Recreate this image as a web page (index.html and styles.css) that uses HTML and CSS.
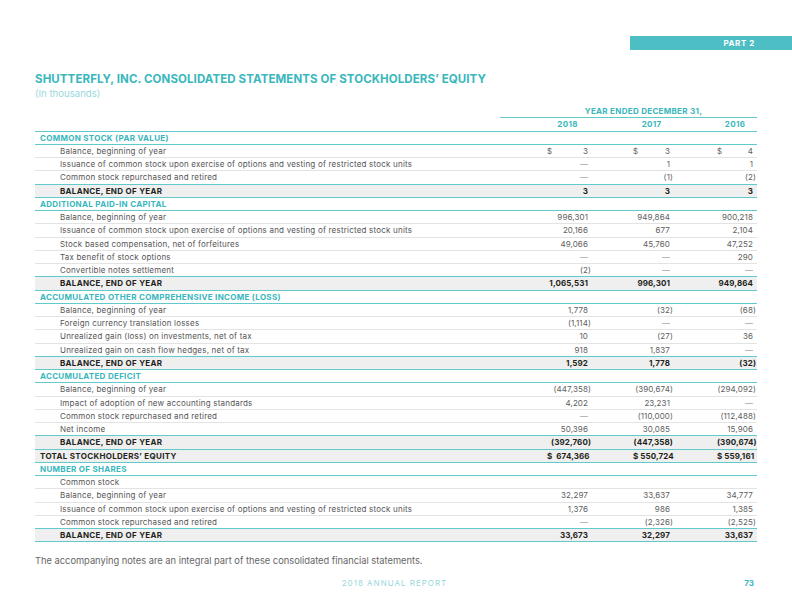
FILE: index.html
```html
<!DOCTYPE html>
<html lang="en">
<head>
    <meta charset="UTF-8">
    <meta name="viewport" content="width=device-width, initial-scale=1.0">
    <title>Consolidated Statements of Stockholders' Equity</title>
    <link rel="stylesheet" href="styles.css">
</head>
<body>
    <div class="page">
        <div class="tab">PART 2</div>

        <h1 class="title">SHUTTERFLY, INC. CONSOLIDATED STATEMENTS OF STOCKHOLDERS’ EQUITY</h1>
        <p class="subtitle">(In thousands)</p>

        <div class="statement">
            <div class="row top">
                <span></span>
                <span class="period">YEAR ENDED DECEMBER 31,</span>
            </div>
            <div class="row years">
                <span></span>
                <span>2018</span>
                <span>2017</span>
                <span>2016</span>
            </div>

            <div class="row section"><span class="lbl">COMMON STOCK (PAR VALUE)</span></div>
            <div class="row">
                <span class="lbl">Balance, beginning of year</span>
                <span class="num"><i class="cur">$</i>3</span>
                <span class="num"><i class="cur">$</i>3</span>
                <span class="num"><i class="cur">$</i>4</span>
            </div>
            <div class="row">
                <span class="lbl">Issuance of common stock upon exercise of options and vesting of restricted stock units</span>
                <span class="num dash">—</span>
                <span class="num">1</span>
                <span class="num">1</span>
            </div>
            <div class="row last">
                <span class="lbl">Common stock repurchased and retired</span>
                <span class="num dash">—</span>
                <span class="num n">(1)</span>
                <span class="num n">(2)</span>
            </div>
            <div class="row balance">
                <span class="lbl">BALANCE, END OF YEAR</span>
                <span class="num">3</span>
                <span class="num">3</span>
                <span class="num">3</span>
            </div>

            <div class="row section"><span class="lbl">ADDITIONAL PAID-IN CAPITAL</span></div>
            <div class="row">
                <span class="lbl">Balance, beginning of year</span>
                <span class="num">996,301</span>
                <span class="num">949,864</span>
                <span class="num">900,218</span>
            </div>
            <div class="row">
                <span class="lbl">Issuance of common stock upon exercise of options and vesting of restricted stock units</span>
                <span class="num">20,166</span>
                <span class="num">677</span>
                <span class="num">2,104</span>
            </div>
            <div class="row">
                <span class="lbl">Stock based compensation, net of forfeitures</span>
                <span class="num">49,066</span>
                <span class="num">45,760</span>
                <span class="num">47,252</span>
            </div>
            <div class="row">
                <span class="lbl">Tax benefit of stock options</span>
                <span class="num dash">—</span>
                <span class="num dash">—</span>
                <span class="num">290</span>
            </div>
            <div class="row last">
                <span class="lbl">Convertible notes settlement</span>
                <span class="num n">(2)</span>
                <span class="num dash">—</span>
                <span class="num dash">—</span>
            </div>
            <div class="row balance">
                <span class="lbl">BALANCE, END OF YEAR</span>
                <span class="num">1,065,531</span>
                <span class="num">996,301</span>
                <span class="num">949,864</span>
            </div>

            <div class="row section"><span class="lbl">ACCUMULATED OTHER COMPREHENSIVE INCOME (LOSS)</span></div>
            <div class="row">
                <span class="lbl">Balance, beginning of year</span>
                <span class="num">1,778</span>
                <span class="num n">(32)</span>
                <span class="num n">(68)</span>
            </div>
            <div class="row">
                <span class="lbl">Foreign currency translation losses</span>
                <span class="num n">(1,114)</span>
                <span class="num dash">—</span>
                <span class="num dash">—</span>
            </div>
            <div class="row">
                <span class="lbl">Unrealized gain (loss) on investments, net of tax</span>
                <span class="num">10</span>
                <span class="num n">(27)</span>
                <span class="num">36</span>
            </div>
            <div class="row last">
                <span class="lbl">Unrealized gain on cash flow hedges, net of tax</span>
                <span class="num">918</span>
                <span class="num">1,837</span>
                <span class="num dash">—</span>
            </div>
            <div class="row balance">
                <span class="lbl">BALANCE, END OF YEAR</span>
                <span class="num">1,592</span>
                <span class="num">1,778</span>
                <span class="num n">(32)</span>
            </div>

            <div class="row section"><span class="lbl">ACCUMULATED DEFICIT</span></div>
            <div class="row">
                <span class="lbl">Balance, beginning of year</span>
                <span class="num n">(447,358)</span>
                <span class="num n">(390,674)</span>
                <span class="num n">(294,092)</span>
            </div>
            <div class="row">
                <span class="lbl">Impact of adoption of new accounting standards</span>
                <span class="num">4,202</span>
                <span class="num">23,231</span>
                <span class="num dash">—</span>
            </div>
            <div class="row">
                <span class="lbl">Common stock repurchased and retired</span>
                <span class="num dash">—</span>
                <span class="num n">(110,000)</span>
                <span class="num n">(112,488)</span>
            </div>
            <div class="row last">
                <span class="lbl">Net income</span>
                <span class="num">50,396</span>
                <span class="num">30,085</span>
                <span class="num">15,906</span>
            </div>
            <div class="row balance">
                <span class="lbl">BALANCE, END OF YEAR</span>
                <span class="num n">(392,760)</span>
                <span class="num n">(447,358)</span>
                <span class="num n">(390,674)</span>
            </div>
            <div class="row balance total">
                <span class="lbl">TOTAL STOCKHOLDERS’ EQUITY</span>
                <span class="num">$&nbsp; 674,366</span>
                <span class="num">$ 550,724</span>
                <span class="num">$ 559,161</span>
            </div>

            <div class="row section"><span class="lbl">NUMBER OF SHARES</span></div>
            <div class="row">
                <span class="lbl">Common stock</span>
            </div>
            <div class="row">
                <span class="lbl">Balance, beginning of year</span>
                <span class="num">32,297</span>
                <span class="num">33,637</span>
                <span class="num">34,777</span>
            </div>
            <div class="row">
                <span class="lbl">Issuance of common stock upon exercise of options and vesting of restricted stock units</span>
                <span class="num">1,376</span>
                <span class="num">986</span>
                <span class="num">1,385</span>
            </div>
            <div class="row last">
                <span class="lbl">Common stock repurchased and retired</span>
                <span class="num dash">—</span>
                <span class="num n">(2,326)</span>
                <span class="num n">(2,525)</span>
            </div>
            <div class="row balance">
                <span class="lbl">BALANCE, END OF YEAR</span>
                <span class="num">33,673</span>
                <span class="num">32,297</span>
                <span class="num">33,637</span>
            </div>
        </div>

        <p class="note">The accompanying notes are an integral part of these consolidated financial statements.</p>

        <footer class="footer">
            <span></span>
            <span class="report">2018 ANNUAL REPORT</span>
            <span class="pageno">73</span>
        </footer>
    </div>
</body>
</html>
```

FILE: styles.css
```css
body {
    margin: 0;
    background-color: #ffffff;
    font-family: 'Inter', 'Open Sans', sans-serif;
    color: #555555;
}

.page {
    width: 792px;
    height: 612px;
    padding-top: 36px;
    box-sizing: border-box;
    overflow: hidden;
}

.tab {
    margin-left: 630px;
    height: 14px;
    background-color: #4dbfc4;
    color: #ffffff;
    font-size: 8px;
    font-weight: 700;
    letter-spacing: 0.6px;
    line-height: 14px;
    text-align: right;
    padding-right: 37px;
}

.title {
    margin: 22px 35px 0;
    font-size: 11.5px;
    line-height: 14px;
    font-weight: 700;
    color: #38b7bd;
    letter-spacing: 0.1px;
}

.subtitle {
    margin: 2px 35px 0;
    font-size: 9.6px;
    line-height: 11px;
    color: #9ad8db;
}

.statement {
    margin: 6px 35px 0;
    width: 722px;
}

.row {
    display: grid;
    grid-template-columns: 465px 91px 81px 85px;
    height: 13.25px;
    box-sizing: border-box;
    align-items: center;
    border-bottom: 1px solid #e3e3e3;
    font-size: 8px;
    letter-spacing: 0.2px;
    white-space: nowrap;
}

.row > span:nth-child(2) {
    padding: 0 3px 0 47px;
}

.row > span:nth-child(3) {
    padding: 0 2px 0 42px;
}

.row > span:nth-child(4) {
    padding: 0 4px 0 45px;
}

.lbl {
    padding-left: 25px;
}

.num {
    text-align: right;
    letter-spacing: 0.1px;
    color: #606060;
}

.num.n {
    margin-right: -3px;
}

.dash {
    color: #9a9a9a;
}

.cur {
    float: left;
    font-style: normal;
}

.row.top {
    border-bottom: none;
}

.period {
    grid-column: 2 / 5;
    align-self: stretch;
    display: flex;
    align-items: center;
    justify-content: center;
    padding: 0 0 0 30px !important;
    border-bottom: 1px solid #62c9cd;
    color: #38b7bd;
    font-weight: 700;
    letter-spacing: 0.3px;
}

.years {
    border-bottom: 1px solid #62c9cd;
    color: #38b7bd;
    font-weight: 700;
    letter-spacing: 0.3px;
}

.years span {
    text-align: center;
}

.section {
    border-bottom: 1px solid #62c9cd;
    color: #38b7bd;
    font-weight: 700;
    letter-spacing: 0.3px;
}

.section .lbl,
.total .lbl {
    padding-left: 5px;
}

.row.last {
    border-bottom-color: #62c9cd;
}

.balance {
    background-color: #efefef;
    border-bottom: 1px solid #62c9cd;
    color: #231f20;
    font-weight: 700;
    letter-spacing: 0.3px;
}

.balance .num {
    color: #231f20;
}

.note {
    margin: 13px 35px 0;
    font-size: 9.3px;
    line-height: 12px;
    color: #666666;
}

.footer {
    display: grid;
    grid-template-columns: 1fr auto 1fr;
    margin: 11px 38px 0 35px;
    font-size: 8px;
    line-height: 10px;
}

.report {
    color: #9ad8db;
    letter-spacing: 1px;
}

.pageno {
    text-align: right;
    color: #38b7bd;
    font-weight: 700;
}
```
